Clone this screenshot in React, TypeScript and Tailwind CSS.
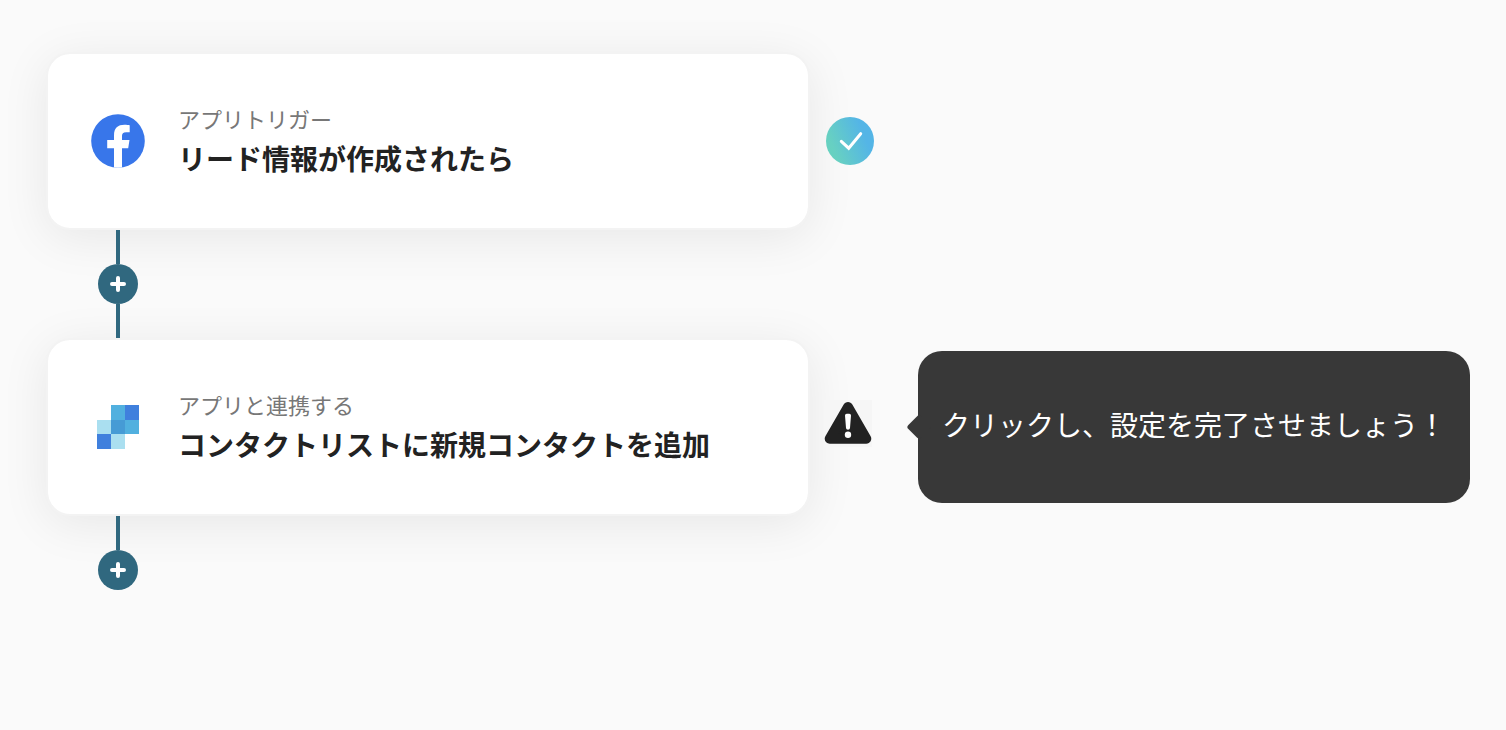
import type { ReactNode } from 'react';

type Step = {
  id: string;
  label: string;
  title: string;
  logo: ReactNode;
  done: boolean;
  hint?: string;
};

function FacebookLogo() {
  return (
    <svg viewBox="0 0 54 54" className="w-[54px] h-[54px]" aria-hidden="true">
      <clipPath id="fb-circle">
        <circle cx="27" cy="27" r="26.8" />
      </clipPath>
      <g clipPath="url(#fb-circle)">
        <rect width="54" height="54" fill="#3876ea" />
        <path
          d="M23 54V34.3H16.2V26H23V21.5C23 14 26.8 10.8 33.5 10.8C35.5 10.8 37.5 11 38.7 11.3V18.2H35.2C32 18.2 31 19.8 31 21.8V26H38.5L37.2 34.3H31V54Z"
          fill="#fff"
        />
      </g>
    </svg>
  );
}

function SendGridLogo() {
  return (
    <svg viewBox="0 0 42 44" className="w-[42px] h-11" shapeRendering="crispEdges" aria-hidden="true">
      <rect x="14" y="0" width="14" height="15" fill="#51b0df" />
      <rect x="28" y="0" width="14" height="15" fill="#4080dd" />
      <rect x="0" y="15" width="14" height="14" fill="#aadff0" />
      <rect x="14" y="15" width="14" height="14" fill="#469bd5" />
      <rect x="28" y="15" width="14" height="14" fill="#51b0df" />
      <rect x="0" y="29" width="14" height="15" fill="#4080dd" />
      <rect x="14" y="29" width="14" height="15" fill="#aadff0" />
    </svg>
  );
}

function DoneIcon() {
  return (
    <svg viewBox="0 0 48 48" className="w-12 h-12" role="img" aria-label="設定済み">
      <defs>
        <linearGradient id="done-fill" x1="0" y1="0.7" x2="1" y2="0.3">
          <stop offset="0" stopColor="#67d2bf" />
          <stop offset="0.15" stopColor="#67d0c2" />
          <stop offset="0.8" stopColor="#54b5e6" />
        </linearGradient>
      </defs>
      <circle cx="24" cy="24" r="24" fill="url(#done-fill)" />
      <path
        d="M15.3 24.3L22.7 31.2L34.7 16.7"
        fill="none"
        stroke="#fff"
        strokeWidth="3"
        strokeLinecap="round"
        strokeLinejoin="miter"
      />
    </svg>
  );
}

function WarningIcon() {
  return (
    <svg viewBox="0 0 52 54" className="w-[52px] h-[54px]" role="img" aria-label="未設定">
      <rect x="0" y="0" width="48" height="47" fill="#f6f6f6" />
      <path
        d="M24 7L42.3 38.7H5.7Z"
        fill="#222"
        stroke="#222"
        strokeWidth="10"
        strokeLinejoin="round"
      />
      <path d="M21 15.5Q21 13.8 22.7 13.8H25.3Q27 13.8 27 15.5L26 28Q25.9 29.7 24 29.7Q22.1 29.7 22 28Z" fill="#fff" />
      <circle cx="24" cy="34.7" r="3.2" fill="#fff" />
    </svg>
  );
}

const steps: Step[] = [
  {
    id: 'trigger',
    label: 'アプリトリガー',
    title: 'リード情報が作成されたら',
    logo: <FacebookLogo />,
    done: true,
  },
  {
    id: 'action',
    label: 'アプリと連携する',
    title: 'コンタクトリストに新規コンタクトを追加',
    logo: <SendGridLogo />,
    done: false,
    hint: 'クリックし、設定を完了させましょう！',
  },
];

function StepCard({ step }: { step: Step }) {
  return (
    <article className="flex items-center gap-8 h-[178px] pl-[42px] pr-8 bg-white bg-clip-padding border-2 border-[#f3f3f3] rounded-3xl shadow-[0_8px_48px_rgba(0,0,0,0.08)]">
      <div className="flex items-center justify-center shrink-0 w-14 h-14">{step.logo}</div>
      <div>
        <p className="text-[22px] leading-10 text-[#777777]">{step.label}</p>
        <h2 className="text-[28px] leading-10 font-bold text-[#222222]">{step.title}</h2>
      </div>
    </article>
  );
}

function Connector({ last }: { last: boolean }) {
  return (
    <div className="relative flex flex-col items-center w-10 ml-[52px]">
      <div className="w-1 h-[34px] bg-[#30687f]" />
      <button type="button" aria-label="ステップを追加" className="flex items-center justify-center w-10 h-10 rounded-full bg-[#30687f]">
        <svg viewBox="0 0 16 16" className="w-4 h-4" aria-hidden="true">
          <path d="M8 2V14M2 8H14" stroke="#fff" strokeWidth="4" strokeLinecap="round" />
        </svg>
      </button>
      {!last && <div className="w-1 h-[34px] bg-[#30687f]" />}
    </div>
  );
}

function Hint({ text }: { text: string }) {
  return (
    <div className="relative w-fit ml-[42px] px-6 py-14 rounded-3xl bg-[#383838] text-white">
      <span className="absolute -left-2 top-1/2 w-[18px] h-[18px] -translate-y-1/2 rotate-45 rounded-[3px] bg-[#383838]" />
      <p className="relative text-[28px] leading-10 whitespace-nowrap">{text}</p>
    </div>
  );
}

export default function App() {
  return (
    <main className="min-h-screen bg-[#fafafa] pt-[52px] pl-[46px] pr-9 font-['Liberation_Sans','Noto_Sans_CJK_JP',sans-serif]" lang="ja">
      {steps.map((step, i) => (
        <section key={step.id}>
          <div className="grid grid-cols-[minmax(0,764px)_66px_minmax(0,1fr)] items-center">
            <StepCard step={step} />
            <div className="relative flex justify-center pl-[14px]">
              {step.done ? <DoneIcon /> : <WarningIcon />}
            </div>
            {step.hint && <Hint text={step.hint} />}
          </div>
          <Connector last={i === steps.length - 1} />
        </section>
      ))}
    </main>
  );
}
